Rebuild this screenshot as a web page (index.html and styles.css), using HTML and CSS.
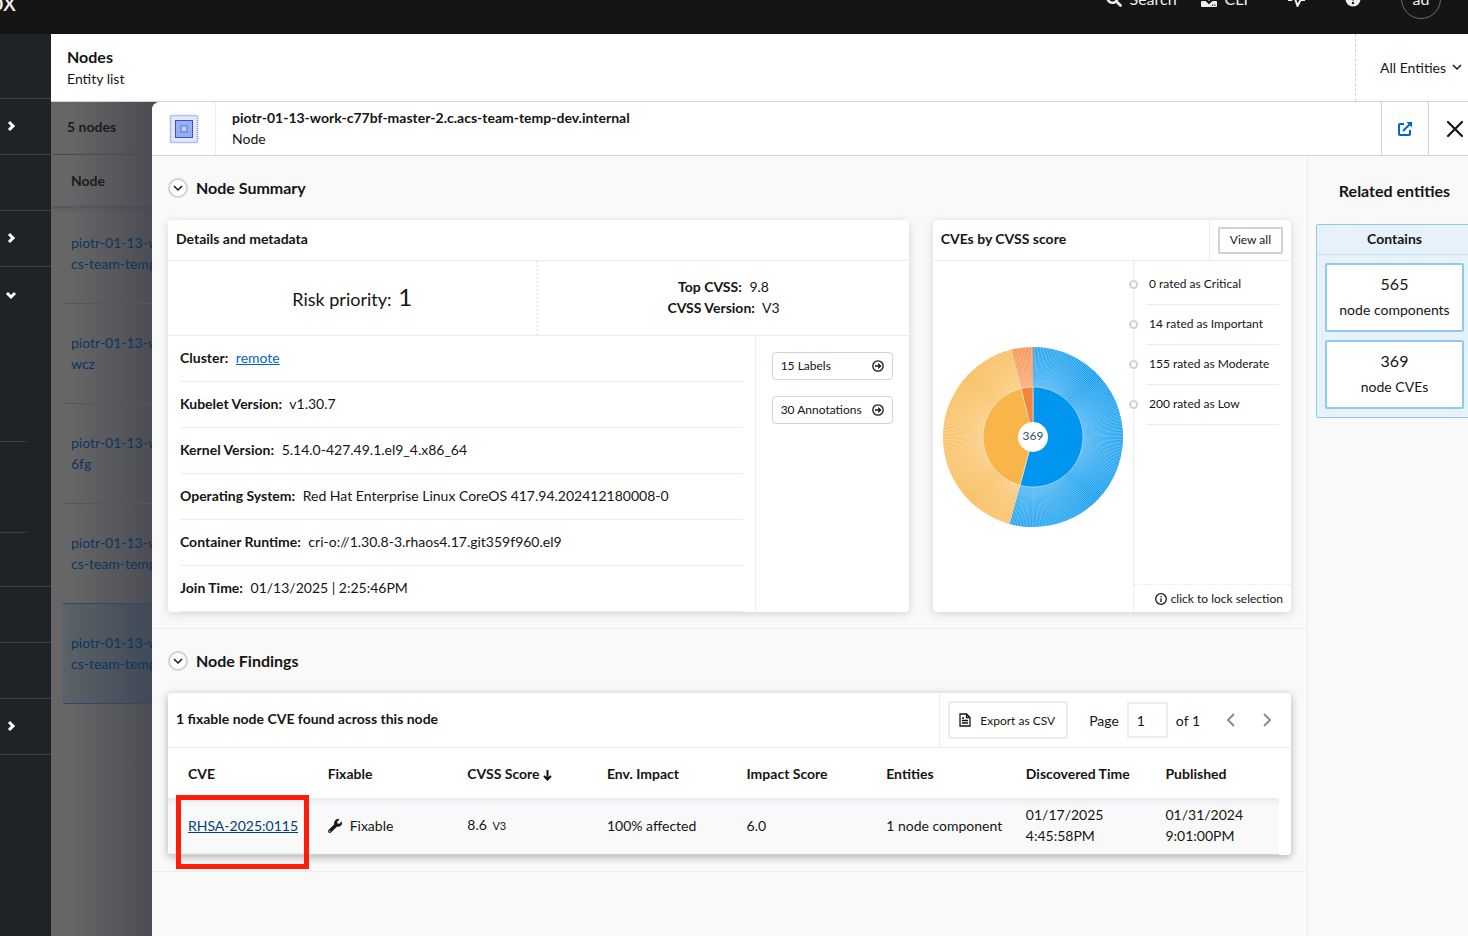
FILE: index.html
```
<!DOCTYPE html>
<html lang="en">
<head>
    <meta charset="UTF-8">
    <meta name="viewport" content="width=device-width, initial-scale=1.0">
    <title>Nodes</title>
    <link rel="stylesheet" href="styles.css">
</head>
<body>
<div class="page">
    <header class="topbar">
        <div class="topbar-inner">
            <div class="logo">ox</div>
            <nav class="tools">
                <a href="#" class="tool">
                    <svg width="16" height="16" viewBox="0 0 512 512" fill="#f0f0f0"><path d="M505 442.700L405.300 343c-4.500-4.500-10.600-7-17-7H372c27.600-35.300 44-79.700 44-128C416 93.100 322.900 0 208 0S0 93.100 0 208s93.100 208 208 208c48.300 0 92.700-16.400 128-44v16.300c0 6.400 2.500 12.500 7 17l99.700 99.700c9.400 9.400 24.600 9.400 33.900 0l28.300-28.300c9.400-9.400 9.400-24.600.1-34zM208 336c-70.700 0-128-57.200-128-128 0-70.700 57.200-128 128-128 70.700 0 128 57.200 128 128 0 70.700-57.200 128-128 128z"/></svg>
                    Search
                </a>
                <button class="tool tool-cli">
                    <svg width="16" height="16" viewBox="0 0 16 16" fill="#f0f0f0"><path d="M6.500 0h3v5h3.500L8 10 3 5h3.500z"/><path d="M1 10h3.500L8 13.300 11.500 10H15q1 0 1 1v4q0 1-1 1H1q-1 0-1-1v-4q0-1 1-1z"/><path fill="#151515" d="M11 13.500h1.200v1.200H11zM13.300 13.500h1.200v1.200h-1.200z"/></svg>
                    CLI
                </button>
                <button class="tool" aria-label="System health">
                    <svg width="17" height="16" viewBox="0 0 17 16" fill="none" stroke="#f0f0f0" stroke-width="2" stroke-linejoin="round"><path d="M0 9h3.500l2-6 4 12 3-6H17"/></svg>
                </button>
                <button class="tool" aria-label="Help">
                    <svg width="16" height="16" viewBox="0 0 16 16"><circle cx="8" cy="8" r="7.500" fill="#f0f0f0"/><path d="M5.500 6.200C5.500 3 10.500 3 10.500 6c0 2-2.500 1.600-2.500 3.600" fill="none" stroke="#151515" stroke-width="1.800"/><circle cx="8" cy="12" r="1.200" fill="#151515"/></svg>
                </button>
                <button class="avatar">ad</button>
            </nav>
        </div>
    </header>

    <div class="body">
        <nav class="sidebar">
            <div class="side-item side-first"></div>
            <div class="side-item"><svg width="12" height="12" viewBox="0 0 12 12"><path d="M4 2l4 4-4 4"/></svg></div>
            <div class="side-item"></div>
            <div class="side-item"><svg width="12" height="12" viewBox="0 0 12 12"><path d="M4 2l4 4-4 4"/></svg></div>
            <div class="side-group">
                <div class="side-item side-open"><svg width="12" height="12" viewBox="0 0 12 12"><path d="M2 4l4 4 4-4"/></svg></div>
                <div class="side-sub side-sub-tall"></div>
                <div class="side-sub"></div>
                <div class="side-sub side-sub-last"></div>
            </div>
            <div class="side-item"></div>
            <div class="side-item"></div>
            <div class="side-item"><svg width="12" height="12" viewBox="0 0 12 12"><path d="M4 2l4 4-4 4"/></svg></div>
        </nav>

        <main class="content">
            <div class="list-header">
                <div>
                    <h1>Nodes</h1>
                    <div>Entity list</div>
                </div>
                <button class="all-entities">All Entities
                    <svg width="10" height="8" viewBox="0 0 10 8"><path d="M1 2l4 4 4-4"/></svg>
                </button>
            </div>

            <div class="workspace">
                <section class="list">
                    <h2 class="list-count">5 nodes</h2>
                    <div class="list-col">Node</div>
                    <a href="#" class="list-row">piotr-01-13-work<br>cs-team-temp-dev</a>
                    <a href="#" class="list-row">piotr-01-13-work<br>wcz</a>
                    <a href="#" class="list-row">piotr-01-13-work<br>6fg</a>
                    <a href="#" class="list-row">piotr-01-13-work<br>cs-team-temp-dev</a>
                    <a href="#" class="list-row selected">piotr-01-13-work<br>cs-team-temp-dev</a>
                </section>

                <section class="panel">
                    <div class="panel-header">
                        <div class="panel-icon">
                            <svg width="30" height="30" viewBox="0 0 30 30"><rect x="1.500" y="1.500" width="27" height="27" rx="1" fill="#e3e9fb" stroke="#6d8df5" stroke-width="1.500" stroke-dasharray="1 1"/><rect x="6.500" y="6.500" width="17" height="17" fill="#94aef8" stroke="#3a54b4"/><rect x="12" y="12" width="6" height="6" fill="#c3d0fa" stroke="#5a74c4"/></svg>
                        </div>
                        <div class="panel-title">
                            <strong>piotr-01-13-work-c77bf-master-2.c.acs-team-temp-dev.internal</strong>
                            <div>Node</div>
                        </div>
                        <a href="#" class="panel-open" aria-label="Open in new page">
                            <svg width="16" height="16" viewBox="0 0 16 16" fill="none" stroke="#0066cc" stroke-width="2"><path d="M7 3H3q-1 0-1 1v9q0 1 1 1h9q1 0 1-1V9"/><path d="M6 10l7-7"/><path d="M9.500 1H15v5.500z" fill="#0066cc" stroke="none"/></svg>
                        </a>
                        <button class="panel-close" aria-label="Close">
                            <svg width="18" height="18" viewBox="0 0 18 18" fill="none" stroke="#151515" stroke-width="2.200" stroke-linecap="round"><path d="M2 2l14 14M16 2L2 16"/></svg>
                        </button>
                    </div>

                    <div class="panel-body">
                        <div class="panel-main">
                            <section class="block">
                                <div class="block-title">
                                    <button class="toggle" aria-label="Toggle Node Summary"><svg width="10" height="8" viewBox="0 0 10 8"><path d="M1 2l4 4 4-4"/></svg></button>
                                    <h2>Node Summary</h2>
                                </div>
                                <div class="cards">
                                    <article class="card details">
                                        <h3 class="card-title">Details and metadata</h3>
                                        <div class="scores">
                                            <div class="risk">Risk priority: <span>1</span></div>
                                            <div class="cvss">
                                                <div><b>Top CVSS:</b> 9.8</div>
                                                <div><b>CVSS Version:</b> V3</div>
                                            </div>
                                        </div>
                                        <div class="meta">
                                            <ul class="meta-list">
                                                <li><b>Cluster:</b> <a href="#">remote</a></li>
                                                <li><b>Kubelet Version:</b> v1.30.7</li>
                                                <li><b>Kernel Version:</b> 5.14.0-427.49.1.el9_4.x86_64</li>
                                                <li><b>Operating System:</b> Red Hat Enterprise Linux CoreOS 417.94.202412180008-0</li>
                                                <li><b>Container Runtime:</b> cri-o://1.30.8-3.rhaos4.17.git359f960.el9</li>
                                                <li><b>Join Time:</b> 01/13/2025 | 2:25:46PM</li>
                                            </ul>
                                            <div class="meta-buttons">
                                                <button>15 Labels <svg width="12" height="12" viewBox="0 0 12 12"><circle cx="6" cy="6" r="5.200"/><path d="M3 6h5.500M6.200 3.600L8.600 6 6.200 8.400"/></svg></button>
                                                <button>30 Annotations <svg width="12" height="12" viewBox="0 0 12 12"><circle cx="6" cy="6" r="5.200"/><path d="M3 6h5.500M6.200 3.600L8.600 6 6.200 8.400"/></svg></button>
                                            </div>
                                        </div>
                                    </article>

                                    <article class="card">
                                        <div class="card-head">
                                            <h3 class="card-title">CVEs by CVSS score</h3>
                                            <div class="view-all"><a href="#">View all</a></div>
                                        </div>
                                        <div class="chart-area">
                                            <div class="chart">
                                                <svg width="180" height="180" viewBox="-90 -90 180 180">
                                                    <g id="sunburst"></g>
                                                    <circle r="15" fill="#fff"/>
                                                    <text class="total" text-anchor="middle" y="3">369</text>
                                                </svg>
                                            </div>
                                            <div class="legend">
                                                <ul>
                                                    <li>0 rated as Critical</li>
                                                    <li>14 rated as Important</li>
                                                    <li>155 rated as Moderate</li>
                                                    <li>200 rated as Low</li>
                                                </ul>
                                                <div class="lock">
                                                    <svg width="12" height="12" viewBox="0 0 12 12"><circle cx="6" cy="6" r="5.300"/><path d="M6 5.200V9M6 3v1.200"/></svg>
                                                    click to lock selection
                                                </div>
                                            </div>
                                        </div>
                                    </article>
                                </div>
                            </section>

                            <section class="block">
                                <div class="block-title">
                                    <button class="toggle" aria-label="Toggle Node Findings"><svg width="10" height="8" viewBox="0 0 10 8"><path d="M1 2l4 4 4-4"/></svg></button>
                                    <h2>Node Findings</h2>
                                </div>
                                <article class="card findings">
                                    <div class="findings-head">
                                        <h3>1 fixable node CVE found across this node</h3>
                                        <div class="findings-tools">
                                            <button class="export">
                                                <svg width="12" height="14" viewBox="0 0 12 14"><path d="M1 1h6.500L11 4.500V13H1zM7.500 1v3.500H11M3 5h2M3 7.500h6M3 10h6"/></svg>
                                                Export as CSV
                                            </button>
                                            <label for="page">Page</label>
                                            <input id="page" type="text" value="1">
                                            <span>of 1</span>
                                            <button class="pager prev" aria-label="Previous page"><svg width="10" height="16" viewBox="0 0 10 16"><path d="M8 2L2 8l6 6"/></svg></button>
                                            <button class="pager" aria-label="Next page"><svg width="10" height="16" viewBox="0 0 10 16"><path d="M2 2l6 6-6 6"/></svg></button>
                                        </div>
                                    </div>
                                    <table>
                                        <thead>
                                            <tr>
                                                <th>CVE</th>
                                                <th>Fixable</th>
                                                <th>CVSS Score <svg width="9" height="12" viewBox="0 0 9 12"><path d="M4.500 1v9.500M1 7l3.500 3.500L8 7"/></svg></th>
                                                <th>Env. Impact</th>
                                                <th>Impact Score</th>
                                                <th>Entities</th>
                                                <th>Discovered Time</th>
                                                <th>Published</th>
                                            </tr>
                                        </thead>
                                        <tbody>
                                            <tr>
                                                <td class="cve"><a href="#">RHSA-2025:0115</a><span class="marker"></span></td>
                                                <td><svg class="wrench" width="14" height="14" viewBox="0 0 512 512"><path d="M507.700 109.100c-2.200-9-13.500-12.100-20.100-5.500l-74.400 74.400-67.900-11.300L334 98.900l74.400-74.400c6.600-6.600 3.400-17.900-5.700-20.200-47.400-11.700-99.600.9-136.600 37.900-39.600 39.600-50.500 97.100-34.100 147.200L18.700 402.800c-25 25-25 65.500 0 90.500s65.500 25 90.500 0l213.200-213.200c50.100 16.700 107.500 5.700 147.400-34.200 37.100-37.100 49.700-89.300 37.900-136.800zM64 472c-13.200 0-24-10.800-24-24 0-13.300 10.700-24 24-24s24 10.700 24 24c0 13.200-10.700 24-24 24z"/></svg>Fixable</td>
                                                <td>8.6 <small>V3</small></td>
                                                <td>100% affected</td>
                                                <td>6.0</td>
                                                <td>1 node component</td>
                                                <td>01/17/2025<br>4:45:58PM</td>
                                                <td>01/31/2024<br>9:01:00PM</td>
                                            </tr>
                                        </tbody>
                                    </table>
                                </article>
                            </section>
                        </div>

                        <aside class="related">
                            <h2>Related entities</h2>
                            <div class="contains">
                                <h3>Contains</h3>
                                <a href="#"><span>565</span>node components</a>
                                <a href="#"><span>369</span>node CVEs</a>
                            </div>
                        </aside>
                    </div>
                </section>
            </div>
        </main>
    </div>
</div>

<script>
    // one slice for each CVE, clockwise from the top
    const groups = [
        { count: 200, color: "#0095ee" },
        { count: 155, color: "#f8b64a" },
        { count: 14, color: "#f68439" }
    ];
    const total = 369;
    const sunburst = document.getElementById("sunburst");

    function point(index, radius){
        const angle = index / total * 2 * Math.PI;
        return (Math.sin(angle) * radius).toFixed(2) + " " + (-Math.cos(angle) * radius).toFixed(2);
    }

    function wedge(from, to, radius){
        const large = (to - from) > total / 2 ? 1 : 0;
        return "M0 0L" + point(from, radius) + "A" + radius + " " + radius + " 0 " + large + " 1 " + point(to, radius) + "Z";
    }

    function addPath(d, className, color){
        const path = document.createElementNS("http://www.w3.org/2000/svg", "path");
        path.setAttribute("d", d);
        path.setAttribute("class", className);
        if(color){
            path.setAttribute("fill", color);
        }
        sunburst.appendChild(path);
    }

    let start = 0;
    groups.forEach((group) => {
        addPath(wedge(start, start + group.count, 90), "slice", group.color);
        start += group.count;
    });

    for(let i = 0; i < total; i++){
        addPath("M" + point(i, 50) + "L" + point(i, 90), "ray");
    }

    start = 0;
    groups.forEach((group) => {
        addPath(wedge(start, start + group.count, 50), "inner", group.color);
        start += group.count;
    });
</script>
</body>
</html>
```
FILE: styles.css
```
* {
    box-sizing: border-box;
}

body {
    margin: 0;
    height: 100vh;
    overflow: hidden;
    font-family: Lato, "Open Sans", sans-serif;
    font-size: 14px;
    line-height: 21px;
    color: #151515;
    background: #f9f9f9;
}

h1, h2, h3, ul {
    margin: 0;
    padding: 0;
    list-style: none;
    font-weight: 700;
}

ul {
    font-weight: 400;
}

h1, h2 {
    font-size: 16px;
}

h3 {
    font-size: 14px;
}

b, strong, th {
    font-weight: 700;
}

a {
    color: #0066cc;
}

button, input {
    font: inherit;
    color: inherit;
    background: none;
    border: 0;
    padding: 0;
}

button {
    cursor: pointer;
}

.page {
    display: flex;
    flex-direction: column;
    height: 100vh;
    margin-right: -12px;
}

/* top bar */
.topbar {
    flex: none;
    height: 34px;
    overflow: hidden;
    background: #151515;
    color: #f0f0f0;
}

.topbar-inner {
    display: flex;
    justify-content: space-between;
    align-items: center;
    height: 70px;
    margin-top: -36px;
    padding-right: 39px;
    font-size: 16px;
}

.logo {
    display: flex;
    justify-content: flex-end;
    width: 16px;
    font-size: 26px;
    line-height: 70px;
    padding-top: 4px;
}

.tools {
    display: flex;
    align-items: center;
    gap: 40px;
}

.tool {
    display: flex;
    align-items: center;
    gap: 8px;
    color: #f0f0f0;
    line-height: 18px;
    text-decoration: none;
}

.tool-cli {
    margin-left: -16px;
}

.avatar {
    width: 40px;
    height: 40px;
    padding-bottom: 2px;
    border: 1px solid #6a6e73;
    border-radius: 50%;
}

.body {
    display: flex;
    flex: 1;
    min-height: 0;
}

/* side navigation */
.sidebar {
    flex: none;
    width: 51px;
    background: #1f2326;
}

.side-item {
    display: flex;
    align-items: center;
    height: 56px;
    padding: 0 0 1px 5px;
    border-bottom: 1px solid #3c3f42;
}

.side-first {
    height: 65px;
}

.side-item svg {
    fill: none;
    stroke: #fff;
    stroke-width: 3;
}

.side-group {
    border-bottom: 1px solid #3c3f42;
}

.side-open {
    border-bottom: 0;
}

.side-sub {
    width: 27px;
    height: 91px;
    border-bottom: 1px solid #3c3f42;
}

.side-sub-tall {
    height: 119px;
}

.side-sub-last {
    height: 53px;
    border-bottom: 0;
}

.content {
    display: flex;
    flex-direction: column;
    flex: 1;
    min-width: 0;
}

.list-header {
    display: flex;
    justify-content: space-between;
    align-items: stretch;
    height: 68px;
    background: #fff;
    border-bottom: 1px solid #d2d2d2;
}

.list-header > div {
    padding: 11px 16px;
}

.list-header h1 {
    line-height: 23px;
}

.all-entities {
    display: flex;
    align-items: center;
    gap: 6px;
    padding: 0 18px 1px 24px;
    border-left: 1px dashed #d2d2d2;
}

.all-entities svg, .toggle svg {
    fill: none;
    stroke: #151515;
    stroke-width: 1.5;
}

.workspace {
    display: flex;
    flex: 1;
    min-height: 0;
    background: #4c4d54;
}

/* dimmed list behind the panel */
.list {
    flex: none;
    width: 101px;
    overflow: hidden;
    white-space: nowrap;
    background: linear-gradient(to right, #666666 20%, #4c4d54);
    color: #1b1b1c;
}

.list-count {
    height: 53px;
    padding-left: 16px;
    font-size: 14px;
    line-height: 50px;
    border-bottom: 1px solid #4d4e51;
}

.list-col {
    height: 51px;
    padding-left: 20px;
    font-weight: 700;
    line-height: 52px;
    box-shadow: 0 2px 4px rgba(64, 65, 90, 0.5);
}

.list-row {
    display: block;
    height: 100px;
    margin-left: 12px;
    padding: 28px 8px;
    color: #0c355f;
    text-decoration: none;
    border-bottom: 1px solid #56575b;
}

.list-row:first-of-type {
    height: 98px;
    padding-top: 26px;
}

.list-row:nth-of-type(4) {
    border-color: #2f4a68;
}

.selected {
    background: linear-gradient(to right, #5b6367, #414857);
    border-color: #2f4a68;
}

/* side panel */
.panel {
    display: flex;
    flex-direction: column;
    flex: 1;
    min-width: 0;
    background: #f9f9f9;
    border-radius: 8px 0 0 0;
    overflow: hidden;
}

.panel-header {
    display: flex;
    flex: none;
    height: 54px;
    background: #fff;
    border-bottom: 1px solid #d2d2d2;
}

.panel-icon, .panel-open, .panel-close {
    display: flex;
    align-items: center;
    justify-content: center;
}

.panel-icon {
    width: 64px;
    border-right: 1px solid #ededed;
}

.panel-title {
    flex: 1;
    padding: 5px 16px;
}

.panel-open {
    width: 47px;
    border-left: 1px solid #d2d2d2;
}

.panel-close {
    width: 52px;
    border-left: 1px solid #d2d2d2;
}

.panel-body {
    display: flex;
    flex: 1;
    min-height: 0;
}

.panel-main {
    flex: 1;
    min-width: 0;
    border-right: 1px solid #ededed;
}

.block {
    padding: 0 16px 16px;
    border-bottom: 1px solid #ededed;
}

.block-title {
    display: flex;
    align-items: center;
    gap: 8px;
    height: 64px;
}

.block-title h2 {
    padding-bottom: 2px;
}

.toggle {
    display: flex;
    align-items: center;
    justify-content: center;
    width: 20px;
    height: 20px;
    background: #fff;
    border: 2px solid #d2d2d2;
    border-radius: 50%;
}

.cards {
    display: grid;
    grid-template-columns: repeat(3, 1fr);
    gap: 24px;
}

.card {
    display: flex;
    flex-direction: column;
    background: #fff;
    border-radius: 4px;
    box-shadow: 0 2px 10px rgba(0, 0, 0, 0.15);
}

.details {
    grid-column: span 2;
}

.card-title {
    height: 41px;
    padding: 0 8px;
    line-height: 37px;
    border-bottom: 1px solid #ededed;
}

.scores {
    display: flex;
    height: 75px;
    border-bottom: 1px solid #ededed;
}

.scores > div {
    flex: 1;
    text-align: center;
}

.scores .risk {
    flex: none;
    width: 50%;
    font-size: 18px;
    line-height: 72px;
    border-right: 2px dotted #ededed;
}

.risk span {
    margin-left: 2px;
    font-size: 24px;
}

.cvss {
    padding: 15px;
}

.cvss b, .meta-list b {
    margin-right: 4px;
}

.meta {
    display: flex;
    flex: 1;
}

.meta-list {
    flex: 1;
    padding: 0 12px;
    border-right: 1px solid #ededed;
}

.meta-list li {
    height: 46px;
    line-height: 43px;
    border-bottom: 1px solid #ededed;
}

.meta-buttons {
    display: flex;
    flex-direction: column;
    gap: 16px;
    padding: 16px;
}

.meta-buttons button {
    display: flex;
    align-items: center;
    justify-content: space-between;
    gap: 8px;
    width: 121px;
    height: 28px;
    padding: 0 8px;
    font-size: 12px;
    line-height: 24px;
    white-space: nowrap;
    border: 1px solid #d2d2d2;
    border-radius: 4px;
}

.meta-buttons svg, .lock svg, .export svg, th svg {
    flex: none;
    fill: none;
    stroke: #151515;
    stroke-width: 1.3;
}

th svg {
    stroke-width: 2;
    vertical-align: -2px;
}

.card-head {
    display: flex;
    border-bottom: 1px solid #ededed;
}

.card-head .card-title {
    flex: 1;
    height: 40px;
    border: 0;
}

.view-all {
    display: flex;
    align-items: center;
    padding: 0 8px;
    border-left: 1px solid #ededed;
}

.view-all a {
    padding: 0 10px 2px;
    font-size: 12px;
    color: #151515;
    text-decoration: none;
    border: 2px solid #d2d2d2;
    border-radius: 2px;
}

.chart-area {
    display: flex;
    flex: 1;
}

.chart {
    display: flex;
    flex: 1;
    align-items: center;
    justify-content: center;
}

.ray {
    fill: none;
    stroke: #fff;
    stroke-width: 0.4;
}

.inner {
    stroke: rgba(255, 255, 255, 0.5);
    stroke-width: 1;
}

.total {
    font-size: 12px;
    fill: #2b4f70;
}

.legend {
    display: flex;
    flex-direction: column;
    justify-content: space-between;
    width: 158px;
    border-left: 1px solid #ededed;
    font-size: 12px;
}

.legend ul {
    padding: 4px 12px 0;
}

.legend li {
    position: relative;
    height: 40px;
    padding-left: 3px;
    line-height: 38px;
    white-space: nowrap;
    border-bottom: 1px solid #ededed;
}

/* dot on the divider line */
.legend li::before {
    content: "";
    position: absolute;
    left: -17px;
    top: 15px;
    width: 9px;
    height: 9px;
    box-sizing: border-box;
    background: #fff;
    border: 2px solid #d2d2d2;
    border-radius: 50%;
}

.lock {
    display: flex;
    align-items: center;
    justify-content: flex-end;
    gap: 4px;
    height: 28px;
    padding-right: 8px;
    white-space: nowrap;
    border-top: 1px dashed #ededed;
}

/* findings */
.findings {
    box-shadow: 0 2px 8px rgba(0, 0, 0, 0.3);
}

.findings-head {
    display: flex;
    justify-content: space-between;
    height: 55px;
    border-bottom: 1px solid #ededed;
}

.findings-head h3 {
    padding-left: 8px;
    line-height: 51px;
}

.findings-tools {
    display: flex;
    align-items: center;
    gap: 8px;
    padding: 0 19px 0 8px;
    border-left: 1px solid #ededed;
}

.export {
    display: flex;
    align-items: center;
    gap: 9px;
    height: 38px;
    margin-right: 13px;
    padding: 0 11px 0 9px;
    font-size: 12px;
    border: 2px solid #ededed;
    border-radius: 2px;
}

.findings-tools input {
    width: 41px;
    height: 36px;
    padding: 0 8px;
    border: 2px solid #ededed;
}

.pager {
    display: flex;
}

.pager svg {
    fill: none;
    stroke: #8a8d90;
    stroke-width: 2;
}

.prev {
    margin: 0 18px 0 18px;
}

table {
    width: calc(100% - 12px);
    table-layout: fixed;
    border-collapse: collapse;
}

th, td {
    width: 12.57%;
    padding: 0 0 0 20px;
    text-align: left;
    white-space: nowrap;
}

th {
    height: 50px;
    padding-top: 1px;
}

th:last-child {
    width: auto;
}

tbody tr {
    background: linear-gradient(#e8ebf4, #f9f9f9 8px);
    border-bottom: 1px solid #d2d2d2;
}

td {
    height: 56px;
    padding-bottom: 1px;
}

td small {
    margin-left: 2px;
    font-size: 11px;
}

.cve {
    position: relative;
}

.cve a {
    color: #004080;
}

/* red frame round the CVE link */
.marker {
    position: absolute;
    left: 8px;
    top: -3px;
    width: 133px;
    height: 74px;
    border: 5px solid #ff1e05;
}

.wrench {
    margin-right: 8px;
    vertical-align: -2px;
    fill: #151515;
}

/* related entities */
.related {
    flex: none;
    width: 172px;
    padding: 0 7px 0 8px;
    text-align: center;
}

.related h2 {
    padding: 23px 0 22px;
    line-height: 23px;
    white-space: nowrap;
}

.contains {
    padding: 0 8px 8px;
    background: #e7f1fa;
    border: 1px solid #8fcbe8;
    border-radius: 2px;
}

.contains h3 {
    margin: 0 -8px;
    height: 30px;
    line-height: 27px;
    border-bottom: 1px solid #bee1f4;
}

.contains a {
    display: block;
    height: 69px;
    margin-top: 8px;
    padding-top: 6px;
    color: #151515;
    line-height: 26px;
    white-space: nowrap;
    text-decoration: none;
    background: #fff;
    border: 2px solid #8fcbe8;
    border-radius: 2px;
}

.contains span {
    display: block;
    font-size: 16px;
}
```
